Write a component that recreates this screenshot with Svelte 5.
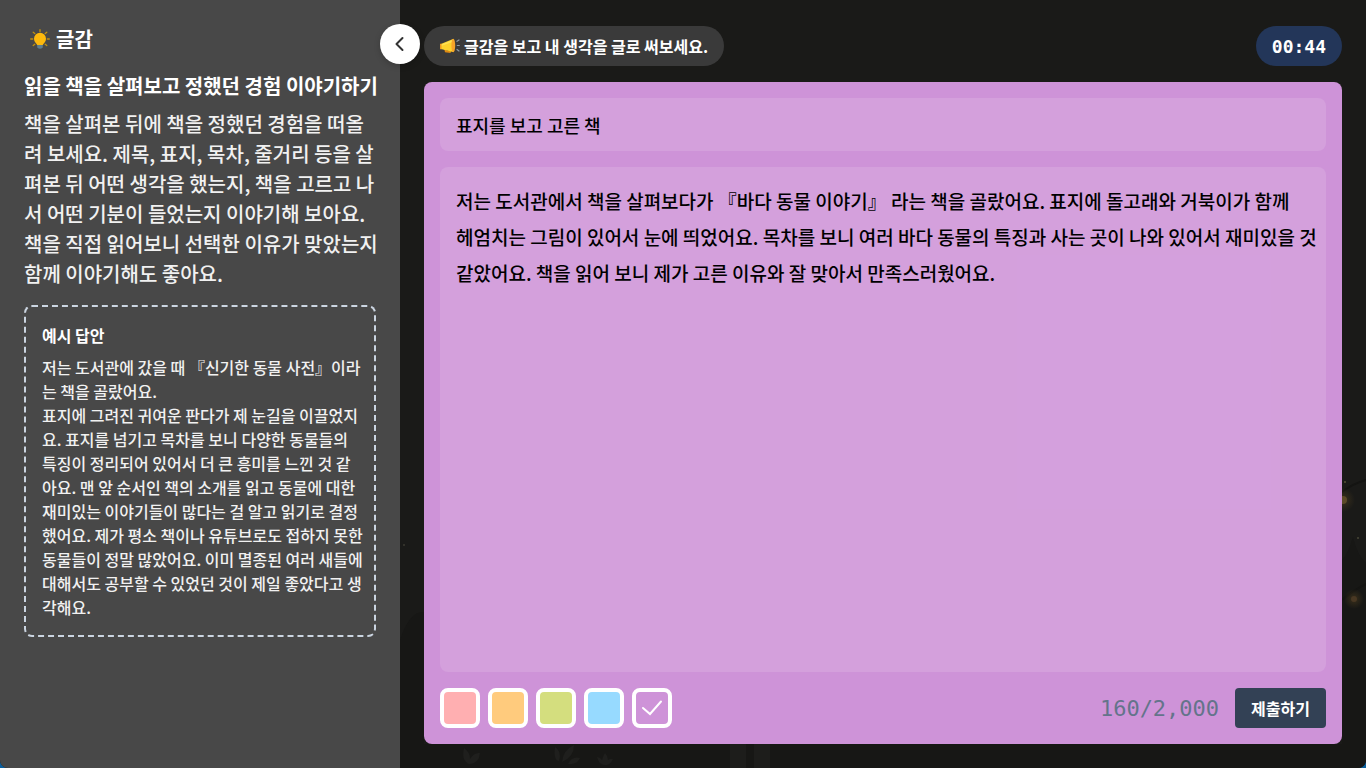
<script>
   const topic = {
      title: '읽을 책을 살펴보고 정했던 경험 이야기하기',
      text: [
         '책을 살펴본 뒤에 책을 정했던 경험을 떠올',
         '려 보세요. 제목, 표지, 목차, 줄거리 등을 살',
         '펴본 뒤 어떤 생각을 했는지, 책을 고르고 나',
         '서 어떤 기분이 들었는지 이야기해 보아요.',
         '책을 직접 읽어보니 선택한 이유가 맞았는지',
         '함께 이야기해도 좋아요.'
      ].join('\n'),
      example: [
         '저는 도서관에 갔을 때 『신기한 동물 사전』이라',
         '는 책을 골랐어요.',
         '표지에 그려진 귀여운 판다가 제 눈길을 이끌었지',
         '요. 표지를 넘기고 목차를 보니 다양한 동물들의',
         '특징이 정리되어 있어서 더 큰 흥미를 느낀 것 같',
         '아요. 맨 앞 순서인 책의 소개를 읽고 동물에 대한',
         '재미있는 이야기들이 많다는 걸 알고 읽기로 결정',
         '했어요. 제가 평소 책이나 유튜브로도 접하지 못한',
         '동물들이 정말 많았어요. 이미 멸종된 여러 새들에',
         '대해서도 공부할 수 있었던 것이 제일 좋았다고 생',
         '각해요.'
      ].join('\n')
   };

   const colors = [
      { name: '분홍', value: '#ffafb1' },
      { name: '주황', value: '#ffcb7d' },
      { name: '연두', value: '#d4de7e' },
      { name: '하늘', value: '#97daff' },
      { name: '보라', value: '#ce93d8' }
   ];

   const maxLength = '2,000';

   let open = $state(true);
   let color = $state('#ce93d8');
   let count = $state(160);
   let title = $state('표지를 보고 고른 책');
   let body = $state([
      '저는 도서관에서 책을 살펴보다가 『바다 동물 이야기』 라는 책을 골랐어요. 표지에 돌고래와 거북이가 함께',
      '헤엄치는 그림이 있어서 눈에 띄었어요. 목차를 보니 여러 바다 동물의 특징과 사는 곳이 나와 있어서 재미있을 것',
      '같았어요. 책을 읽어 보니 제가 고른 이유와 잘 맞아서 만족스러웠어요.'
   ].join('\n'));

   const updateCount = () => {
      count = body.length;
   }
</script>

<div class="app">
   <svg class="scenery" viewBox="0 0 966 768" preserveAspectRatio="xMaxYMax slice" aria-hidden="true">
      <defs>
         <radialGradient id="glow">
            <stop offset="0" stop-color="#6b5324" stop-opacity="0.4" />
            <stop offset="1" stop-color="#6b5324" stop-opacity="0" />
         </radialGradient>
      </defs>
      <path fill="#171715" d="M0 640q10-30 24-28v156H0zM942 560q6-6 11-23 4 18 13 26v205h-24zM0 744h966v24H0z" />
      <path fill="none" stroke="#141412" stroke-width="2" d="M942 492q10-8 24-12M942 600q12-10 24-16" />
      <path fill="#1f1f1d" d="M64 748q6 4 6 11 4-7 10-6-1 11-11 11-8-3-5-16zM155 747q7 5 4 14-6-1-4-14zM162 762q1-12 12-17 0 12-12 17zM168 764q4-8 12-6-3 7-12 6zM197 757q3 0 5 3 1-4 3-7 3 3 3 7 3-2 5-1-3 7-8 6-6 0-8-8z" />
      <path fill="#1d1d1b" d="M330 744h16v24h-16zM354 744h16v24h-16z" />
      <circle cx="943" cy="500" r="12" fill="url(#glow)" />
      <circle cx="943" cy="500" r="4" fill="#5c4a28" />
      <circle cx="954" cy="599" r="10" fill="url(#glow)" />
      <circle cx="954" cy="599" r="3" fill="#493823" />
      <circle cx="945" cy="482" r="1" fill="#555034" />
      <circle cx="958" cy="538" r="1" fill="#474636" />
      <circle cx="4" cy="545" r="1" fill="#3b3a30" />
   </svg>

   {#if open}
      <aside>
         <h2>
            <svg width="20" height="20" viewBox="0 0 20 20" aria-hidden="true">
               <path fill="none" stroke="#c0900f" stroke-width="1.3" stroke-linecap="round" d="M10 .7v1.8M3.2 3.2l1.6 1.4M16.8 3.2l-1.6 1.4M.7 10h2M17.3 10h2M3.2 16.6l1.6-1.4M16.8 16.6l-1.6-1.4" />
               <path fill="#fdb90c" d="M10 3.7a6 6 0 0 0-6 6c0 3 2 4 3.2 6.3h5.6C14 13.7 16 12.7 16 9.7a6 6 0 0 0-6-6z" />
               <path fill="#607d8b" d="M7.2 16h5.6v2.6q-2.8 2.4-5.6 0z" />
            </svg>
            글감
         </h2>
         <h3>{topic.title}</h3>
         <p class="topic">{topic.text}</p>
         <section>
            <h4>예시 답안</h4>
            <p>{topic.example}</p>
         </section>
      </aside>
   {/if}

   <main>
      <button class="toggle" type="button" aria-label="글감 접기" onclick={() => open = !open}>
         <svg width="20" height="20" viewBox="0 0 20 20" aria-hidden="true">
            <path fill="none" stroke="#333" stroke-width="2" stroke-linecap="round" stroke-linejoin="round" d="M12.5 4L6.5 10l6 6" />
         </svg>
      </button>

      <header>
         <div class="pill notice">
            <svg width="20" height="16" viewBox="0 0 20 16" aria-hidden="true">
               <path fill="#e08a12" d="M4 10l1 4.200 5.500.8 1-3-1.600-.4-.8 1.500-2.500-.5-.3-2z" />
               <path fill="#fdd22c" d="M.8 6L13 1v13L.8 11z" />
               <path fill="#fff07a" d="M1 6.500L12 2.200v2L1 8z" opacity="0.5" />
               <path fill="#ee9a20" d="M0 5.800h1.500v5.400H0z" />
               <ellipse cx="13.300" cy="7.500" rx="1.900" ry="6.800" fill="#f6a429" />
               <path fill="none" stroke="#8d9aa3" stroke-width="1.200" stroke-linecap="round" d="M17 3.300l2-1.300M17.300 7.500h2M17 11.500l2 1.500" />
            </svg>
            글감을 보고 내 생각을 글로 써보세요.
         </div>
         <time class="pill timer">00:44</time>
      </header>

      <form style:background-color={color} onsubmit={(e) => e.preventDefault()}>
         <input class="title" type="text" aria-label="제목" bind:value={title} />
         <textarea aria-label="내용" spellcheck="false" bind:value={body} oninput={updateCount}></textarea>
         <footer>
            <div class="colors">
               {#each colors as c}
                  <label style:background-color={c.value}>
                     <input type="radio" name="color" value={c.value} aria-label={c.name} bind:group={color} />
                     {#if c.value === color}
                        <svg width="22" height="18" viewBox="0 0 22 18" aria-hidden="true">
                           <path fill="none" stroke="#fff" stroke-width="2" stroke-linecap="round" d="M2 9l7 6L20 2.5" />
                        </svg>
                     {/if}
                  </label>
               {/each}
            </div>
            <output>{count}/{maxLength}</output>
            <button class="submit" type="submit">제출하기</button>
         </footer>
      </form>
   </main>
</div>

<style>
   :global(body) {
      margin: 0;
      background: #0b5f9e;
   }

   .app {
      position: relative;
      display: flex;
      min-height: 100vh;
      overflow: hidden;
      border-radius: 0 0 8px 8px;
      background: #1a1a18;
      color: #fff;
      font-family: "Noto Sans CJK KR", "Noto Sans", sans-serif;
   }

   .scenery {
      position: absolute;
      top: 0;
      right: 0;
      width: calc(100% - 400px);
      height: 100%;
   }

   aside {
      position: relative;
      flex: 0 0 400px;
      min-width: 0;
      box-sizing: border-box;
      padding: 23px 24px 24px;
      background: #484848;
   }

   h2, h3, h4, p {
      margin: 0;
      white-space: pre;
   }

   h2 {
      display: flex;
      align-items: center;
      gap: 6px;
      margin-bottom: 16px;
      padding-left: 6px;
      font-size: 20px;
      line-height: 32px;
      white-space: normal;
   }

   h3 {
      margin-bottom: 8px;
      font-size: 20px;
      line-height: 30px;
   }

   .topic {
      margin-bottom: 16px;
      color: #f1f1f1;
      font-size: 20px;
      font-weight: 500;
      line-height: 30px;
   }

   section {
      padding: 16px;
      border: 2px dashed #cbd5e1;
      border-radius: 8px;
      color: #f1f1f1;
      font-size: 16px;
      font-weight: 500;
      line-height: 24px;
   }

   h4 {
      margin-bottom: 8px;
      color: #fff;
      font-size: 16px;
   }

   main {
      position: relative;
      flex: 1 1 auto;
      min-width: 0;
      box-sizing: border-box;
      display: flex;
      flex-direction: column;
      gap: 16px;
      padding: 26px 24px 24px;
   }

   .toggle {
      position: absolute;
      top: 24px;
      left: -20px;
      display: flex;
      align-items: center;
      justify-content: center;
      width: 40px;
      height: 40px;
      padding: 0;
      border: none;
      border-radius: 50%;
      background: #fff;
      box-shadow: 0 2px 6px rgba(0, 0, 0, 0.2);
      cursor: pointer;
   }

   header {
      display: flex;
      justify-content: space-between;
   }

   .pill {
      display: flex;
      align-items: center;
      height: 40px;
      padding: 0 16px;
      border-radius: 20px;
      font-weight: 700;
   }

   .notice {
      gap: 4px;
      background: #3a3a3a;
      font-size: 16px;
   }

   .timer {
      background: #233659;
      font-family: "DejaVu Sans Mono", monospace;
      font-size: 18px;
   }

   form {
      flex: 1 1 auto;
      display: flex;
      flex-direction: column;
      gap: 16px;
      padding: 16px;
      border-radius: 8px;
   }

   .title, textarea {
      box-sizing: border-box;
      width: 100%;
      margin: 0;
      border: none;
      border-radius: 8px;
      outline: none;
      background: rgba(255, 255, 255, 0.12);
      color: #000;
      font-family: inherit;
      font-weight: 500;
   }

   .title {
      height: 53px;
      padding: 0 16px;
      font-size: 18px;
   }

   textarea {
      flex: 1 1 auto;
      display: block;
      padding: 16px 4px 16px 16px;
      font-size: 19px;
      line-height: 36px;
      resize: none;
   }

   footer {
      display: flex;
      align-items: center;
      gap: 16px;
   }

   .colors {
      display: flex;
      flex: 1 1 auto;
      gap: 8px;
   }

   label {
      position: relative;
      display: flex;
      align-items: center;
      justify-content: center;
      box-sizing: border-box;
      width: 40px;
      height: 40px;
      border: 4px solid #fff;
      border-radius: 8px;
      cursor: pointer;
   }

   label input {
      position: absolute;
      inset: 0;
      margin: 0;
      opacity: 0;
      cursor: pointer;
   }

   output {
      color: #64748b;
      font-family: "DejaVu Sans Mono", monospace;
      font-size: 22px;
   }

   .submit {
      height: 40px;
      padding: 0 16px;
      border: none;
      border-radius: 4px;
      background: #334155;
      color: #fff;
      font-family: inherit;
      font-size: 16px;
      font-weight: 700;
      cursor: pointer;
   }
</style>
